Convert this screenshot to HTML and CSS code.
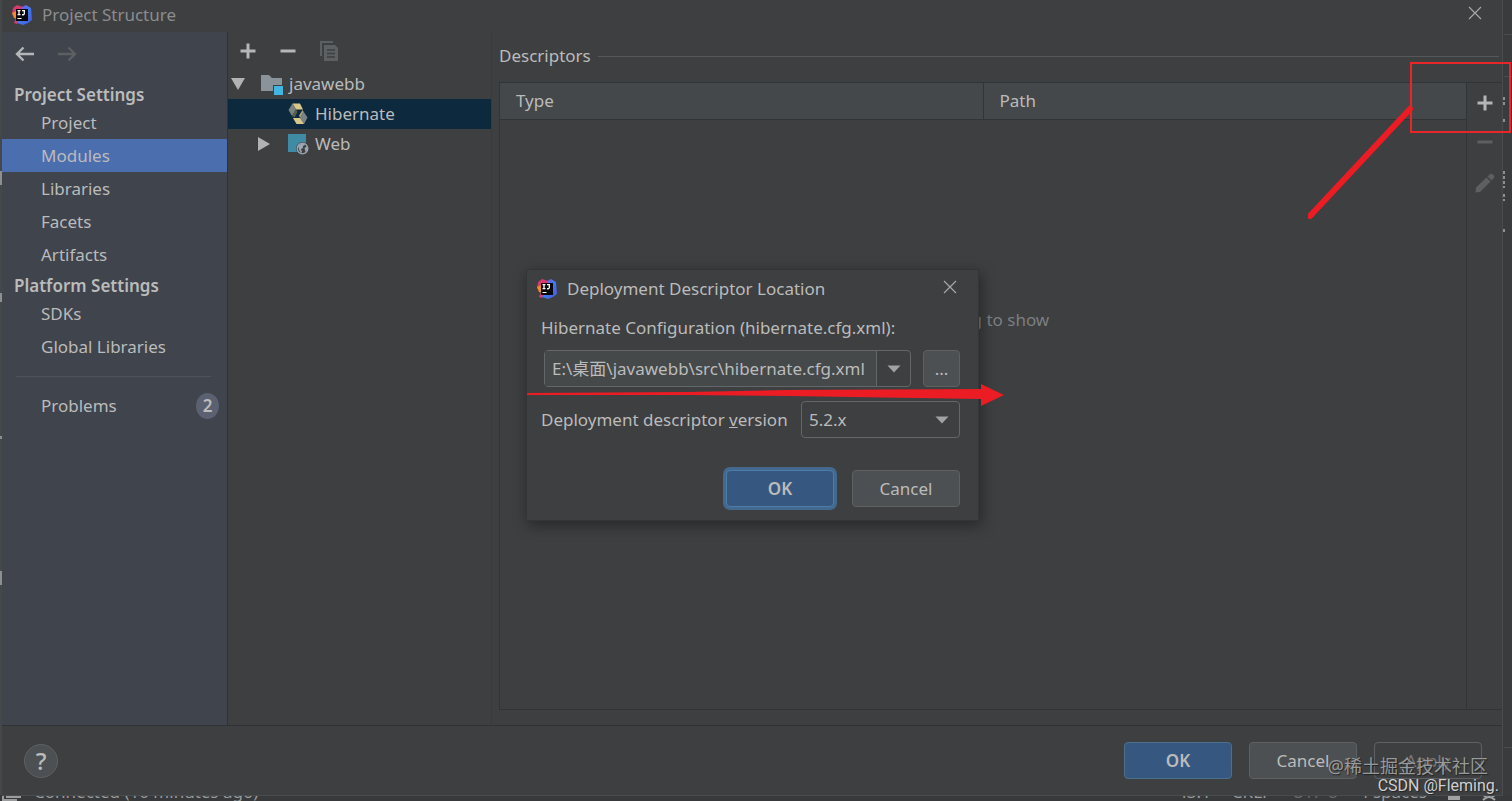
FILE: index.html
```
<!DOCTYPE html>
<html lang="en">
<head>
  <meta charset="UTF-8">
  <meta name="viewport" content="width=device-width, initial-scale=1.0">
  <title>Project Structure</title>
  <link rel="stylesheet" href="styles.css">
</head>
<body>
  <svg width="0" height="0" class="defs">
    <defs>
      <linearGradient id="blue" x1="0" y1="0" x2="1" y2="1">
        <stop offset="0" stop-color="#9a4fd0"/>
        <stop offset="0.5" stop-color="#3d7af0"/>
        <stop offset="1" stop-color="#4a55d8"/>
      </linearGradient>
      <symbol id="logo" viewBox="0 0 20 20">
        <path d="M1 3 5 0 11 2 10 10 5 19 2 18 4 13 0 9Z" fill="#d93a6e"/>
        <path d="M0 8 4 6 5 14 2 13Z" fill="#f08a2c"/>
        <path d="M10 2 14 0 19 3 20 15 16 18 11 20 5 18 10 10Z" fill="url(#blue)"/>
        <rect x="4" y="4" width="12" height="12" fill="#08080c"/>
        <path d="M5.500 5.700h3M7 5.700v4M5.500 9.700h3M10 5.700h3M12.300 5.700v3q0 1.200-2.300 1" fill="none" stroke="#fff" stroke-width="1.300"/>
        <path d="M5.500 13.500h4" stroke="#fff"/>
      </symbol>
      <symbol id="plus" viewBox="0 0 16 16"><path d="M8 0.500v15M0.500 8h15" stroke="currentColor" stroke-width="3"/></symbol>
      <symbol id="minus" viewBox="0 0 16 16"><path d="M0.500 8h15" stroke="currentColor" stroke-width="3"/></symbol>
      <symbol id="close" viewBox="0 0 14 14"><path d="M1 1 13 13M13 1 1 13" stroke="currentColor" stroke-width="1.200"/></symbol>
      <symbol id="caret" viewBox="0 0 14 8"><path d="M0.500 0.500h13L7 7.500Z" fill="currentColor"/></symbol>
    </defs>
  </svg>

  <div class="desktop">
    <!-- editor showing past the window's left side -->
    <svg class="gutter" width="2" height="795" viewBox="0 0 2 795">
      <path d="M1 171v14M1 293v9M1 436v3M1 571v14" stroke="#8d8f90" stroke-width="2"/>
    </svg>
    <div class="window">
      <header class="titlebar">
        <svg class="logo"><use href="#logo"/></svg>
        <h1>Project Structure</h1>
        <button class="close" aria-label="Close"><svg><use href="#close"/></svg></button>
      </header>

      <div class="main">
        <nav class="sidebar">
          <div class="history">
            <button class="icon-btn" aria-label="Back">
              <svg width="20" height="16" viewBox="0 0 20 16"><path d="M19 8H2M8.500 1.500 2 8l6.500 6.500" fill="none" stroke="currentColor" stroke-width="2.400"/></svg>
            </button>
            <button class="icon-btn dim" aria-label="Forward">
              <svg width="20" height="16" viewBox="0 0 20 16"><path d="M1 8h17M11.500 1.500 18 8l-6.500 6.500" fill="none" stroke="currentColor" stroke-width="2.400"/></svg>
            </button>
          </div>
          <h2>Project Settings</h2>
          <a href="#">Project</a>
          <a href="#" class="active">Modules</a>
          <a href="#">Libraries</a>
          <a href="#">Facets</a>
          <a href="#">Artifacts</a>
          <h2 class="next">Platform Settings</h2>
          <a href="#">SDKs</a>
          <a href="#">Global Libraries</a>
          <hr>
          <a href="#">Problems <span class="badge">2</span></a>
        </nav>

        <section class="tree">
          <div class="tree-tools">
            <button class="icon-btn" aria-label="Add"><svg width="16" height="16"><use href="#plus"/></svg></button>
            <button class="icon-btn" aria-label="Remove"><svg width="16" height="16"><use href="#minus"/></svg></button>
            <button class="icon-btn dim" aria-label="Copy">
              <svg width="20" height="20" viewBox="0 0 20 20">
                <path d="M1 15V1h12" fill="none" stroke="currentColor" stroke-width="2"/>
                <path d="M4 4h11l3 3v13H4Z" fill="currentColor"/>
                <path d="M7 9h8M7 12.500h8M7 16h8" stroke="#3d3f41" stroke-width="1.500"/>
              </svg>
            </button>
          </div>
          <div class="row">
            <svg class="toggle" width="14" height="14" viewBox="0 0 14 14"><path d="M0 1h14L7 13Z" fill="#b0b2b3"/></svg>
            <svg width="24" height="22" viewBox="0 0 24 22">
              <path d="M1 2h8l3 3h10v13H1Z" fill="#8a9399"/>
              <path d="M13 12h11v10H13Z" fill="#3d3f41"/>
              <path d="M14 13h9v9h-9Z" fill="#40b6e0"/>
            </svg>
            <span>javawebb</span>
          </div>
          <div class="row leaf selected">
            <svg width="20" height="22" viewBox="0 0 20 22">
              <path d="M4.500 0.500H12L15 6.500H8Z" fill="#d8c98a"/>
              <path d="M4.500 0.500 8 6.500 4 13 0.500 7Z" fill="#7c827e"/>
              <path d="M4 13 8 6.500 9.500 9 6.500 14.500Z" fill="#59604f"/>
              <path d="M15.500 8.500 19.500 14.500 16 21 12 15Z" fill="#7c8286"/>
              <path d="M12 15 11 12.500 14.500 7 15.500 8.500Z" fill="#a9a27a"/>
              <path d="M5 15h7l4 6H8.500Z" fill="#d8c98a"/>
            </svg>
            <span>Hibernate</span>
          </div>
          <div class="row leaf">
            <svg class="toggle" width="14" height="14" viewBox="0 0 14 14"><path d="M1 0v14L13 7Z" fill="#b0b2b3"/></svg>
            <svg width="22" height="22" viewBox="0 0 22 22">
              <path d="M1 1h18v18H1Z" fill="#3f8ba6"/>
              <circle cx="15.500" cy="15.500" r="6.500" fill="#3d3f41"/>
              <circle cx="15.500" cy="15.500" r="5.300" fill="#3d3f41" stroke="#9aa7b0" stroke-width="1.300"/>
              <path d="M11 13q3-3 6-3l1 2-2 1v2l-2 1 1 3-1 1q-2-2-3-7M17.500 15l3-2q1 4-2 6Z" fill="#9aa7b0"/>
            </svg>
            <span>Web</span>
          </div>
        </section>

        <section class="content">
          <h3><span>Descriptors</span></h3>
          <div class="panel">
            <div class="list">
              <table>
                <thead><tr><th>Type</th><th>Path</th></tr></thead>
              </table>
              <p class="empty">Nothing to show</p>
            </div>
            <div class="tools">
              <button class="icon-btn" aria-label="Add descriptor"><svg width="16" height="16"><use href="#plus"/></svg></button>
              <button class="icon-btn dim" aria-label="Remove descriptor"><svg width="16" height="16"><use href="#minus"/></svg></button>
              <button class="icon-btn dim" aria-label="Edit descriptor">
                <svg width="20" height="20" viewBox="0 0 20 20"><path d="M0.500 19.500 1 14.500 11.500 4.500l4 4L5 19ZM12.500 3.500l2-2q1.500-1.500 3.700.3t.3 3.700l-2 2Z" fill="currentColor"/></svg>
              </button>
              <!-- marks the add button -->
              <svg class="mark" width="204" height="160" viewBox="0 0 204 160">
                <rect x="103" y="2" width="99" height="69" fill="none" stroke="#e8262a" stroke-width="2"/>
                <path d="M102 48 2 155" stroke="#ec1c24" stroke-width="6" stroke-linecap="round" fill="none"/>
              </svg>
            </div>
          </div>
        </section>
      </div>

      <footer class="footer">
        <button class="help" aria-label="Help">?</button>
        <div class="buttons">
          <button class="btn primary">OK</button>
          <button class="btn">Cancel</button>
          <button class="btn disabled" disabled>Apply</button>
        </div>
      </footer>

      <div class="modal" role="dialog" aria-labelledby="modal-title">
        <div class="modal-title">
          <svg class="logo"><use href="#logo"/></svg>
          <h4 id="modal-title">Deployment Descriptor Location</h4>
          <button class="close" aria-label="Close dialog"><svg><use href="#close"/></svg></button>
        </div>
        <label for="config">Hibernate Configuration (hibernate.cfg.xml):</label>
        <div class="path-row">
          <div class="combo">
            <input type="text" id="config" value="E:\桌面\javawebb\src\hibernate.cfg.xml">
            <button aria-label="Recent files"><svg width="14" height="8"><use href="#caret"/></svg></button>
          </div>
          <button class="browse" aria-label="Browse">...</button>
        </div>
        <div class="version-row">
          <label for="version">Deployment descriptor <u>v</u>ersion</label>
          <div class="select">
            <select id="version"><option>5.2.x</option></select>
            <svg width="14" height="8"><use href="#caret"/></svg>
          </div>
        </div>
        <div class="buttons">
          <button class="btn primary focus">OK</button>
          <button class="btn">Cancel</button>
        </div>
        <svg class="arrow" width="478" height="24" viewBox="0 0 478 24">
          <path d="M0 10 160 9 260 7 454 6V1L477 12 454 23V16L260 13 160 12 0 12Z" fill="#ec1c24"/>
        </svg>
      </div>
    </div>
    <!-- editor showing past the window's right side -->
    <svg class="edge" width="9" height="795" viewBox="0 0 9 795">
      <path d="M1 34.500h8M1 76.500h8M1 747.500h8" stroke="#4a4d4f"/>
      <path d="M1 171v17M1 194v7M1 229v3M1 97v8M1 119v3" stroke="#8d8f90" stroke-width="2" stroke-dasharray="3 2"/>
    </svg>
  </div>

  <div class="statusbar">
    <svg width="20" height="5" viewBox="0 0 20 5"><path d="M1 0v4h14M5 0v1h13V0" fill="none" stroke="#9a9c9d" stroke-width="2"/></svg>
    <span>Connected (10 minutes ago)</span>
    <div class="status-right">
      <span>43:1</span>
      <span>CRLF</span>
      <span class="faint">UTF-8</span>
      <span>4 spaces</span>
      <svg width="48" height="6" viewBox="0 0 48 6"><path d="M0 1h12v4H0Z" fill="#a0a2a3"/><path d="M35 5q6-6 12 0M35 0l3 2M47 0l-3 2" stroke="#a0a2a3" stroke-width="2" fill="none"/></svg>
    </div>
  </div>

  <div class="watermark">
    <p class="community">@稀土掘金技术社区</p>
    <p class="author">CSDN @Fleming.</p>
  </div>
</body>
</html>
```
FILE: styles.css
```
* { box-sizing: border-box; }
body {
  margin: 0;
  height: 100vh;
  display: flex; flex-direction: column;
  position: relative;
  overflow: hidden;
  background: #37393b;
  color: #bbbbbb;
  font: 17px/24px "Noto Sans", "Noto Sans CJK SC", sans-serif;
}
h1, h2, h3, h4, p { margin: 0; font-size: 17px; font-weight: normal; }
button, input, select { font: inherit; color: inherit; margin: 0; }
button { padding: 0; border: none; background: none; }
svg { display: block; flex: none; }
.defs { position: absolute; }

.desktop { flex: 1; display: flex; min-height: 0; overflow: hidden; }
.window {
  flex: 1;
  position: relative;
  display: flex; flex-direction: column;
  background: #3d3f41;
  border-right: 1px solid #4a4d4f;
  border-bottom: 1px solid #4a4d4f;
}
.gutter { background: #45484b; }
.edge { background: #393b3d; }

/* title bar */
.titlebar { display: flex; align-items: center; height: 32px; padding: 0 20px 2px 10px; gap: 10px; }
.titlebar h1 { flex: 1; color: #8b8d8e; }
.logo { width: 20px; height: 20px; }
.close { color: #a5a7a8; }
.close svg { width: 14px; height: 14px; }
.titlebar .close { margin-bottom: 4px; }

.icon-btn { display: flex; color: #b4b6b7; }
.icon-btn.dim { color: #5d6062; }

.main { flex: 1; display: flex; min-height: 0; }

/* sidebar */
.sidebar {
  width: 226px;
  background: #3f444d;
  border-right: 1px solid #303335;
}
.history { display: flex; gap: 22px; height: 52px; padding: 14px 0 0 13px; }
.sidebar h2 { padding-left: 12px; line-height: 22px; font-weight: 600; }
.sidebar .next { margin-top: 4px; }
.sidebar a {
  display: flex; align-items: center; justify-content: space-between;
  height: 33px;
  padding: 0 8px 0 39px;
  color: inherit;
  text-decoration: none;
}
.sidebar a.active { background: #4b6eaf; }
.sidebar hr {
  height: 1px; border: none;
  margin: 13px 16px 12px 14px;
  background: #4d525b;
}
.badge {
  width: 23px; height: 26px;
  border-radius: 50%;
  background: #5b6170;
  text-align: center;
  line-height: 26px;
  font-weight: 600;
}

/* modules tree */
.tree { width: 264px; border-right: 1px solid #383b3d; }
.tree-tools { display: flex; align-items: center; gap: 24px; height: 37px; padding-left: 12px; }
.row { display: flex; align-items: center; gap: 5px; height: 30px; padding-left: 3px; }
.row .toggle { margin-right: 10px; }
.row.leaf { padding-left: 29px; gap: 6px; }
.row.selected { padding-left: 60px; gap: 7px; background: #0d293e; }

/* descriptors */
.content { flex: 1; display: flex; flex-direction: column; padding: 12px 0 15px 7px; }
.content h3 { display: flex; align-items: center; gap: 7px; margin-bottom: 14px; }
.content h3::after { content: ""; flex: 1; height: 1px; margin-right: 3px; background: #555859; }
.panel { flex: 1; display: flex; border: 1px solid #323537; border-right: none; }
.list { flex: 1; display: flex; flex-direction: column; }
table { width: 100%; border-collapse: collapse; table-layout: fixed; }
th {
  height: 36px;
  padding: 0 16px;
  background: #45484a;
  border-bottom: 1px solid #323537;
  text-align: left;
  font-weight: normal;
}
th + th { border-left: 1px solid #323537; }
.empty { margin: auto; padding-bottom: 188px; color: #7c7e80; }
.tools {
  position: relative;
  width: 36px;
  display: flex; flex-direction: column; align-items: center;
  gap: 23px;
  padding-top: 12px;
  border-left: 1px solid #323537;
}
.mark { position: absolute; top: -22px; right: -10px; z-index: 1; }

/* footer */
.footer {
  display: flex; align-items: center; justify-content: space-between;
  height: 70px;
  padding: 0 20px 0 22px;
  border-top: 1px solid #303335;
}
.help {
  width: 34px; height: 34px;
  border: 1px solid #5e6162;
  border-radius: 50%;
  background: #4c5052;
  font-size: 24px; font-weight: 500;
  line-height: 32px;
}
.buttons { display: flex; gap: 17px; }
.btn {
  width: 108px; height: 37px;
  border: 1px solid #5e6162;
  border-radius: 4px;
  background: #4c5052;
}
.btn.primary { background: #365880; border-color: #4c708c; font-weight: 600; }
.btn.disabled { background: none; color: #777777; }
.btn.focus { box-shadow: 0 0 0 3px #43698f; border-color: #4f7ba8; }

/* deployment descriptor dialog */
.modal {
  position: absolute;
  top: 269px;
  left: calc(50% - 226px);
  width: 453px;
  padding: 0 18px 13px 14px;
  background: #3d3f41;
  border: 1px solid #333638;
  box-shadow: 2px 4px 14px rgba(0,0,0,0.4);
}
.modal-title {
  display: flex; align-items: center; gap: 10px;
  height: 38px;
  margin: 0 3px 8px -4px;
}
.modal-title h4 { flex: 1; }
.modal-title .close { margin-bottom: 4px; }
.modal label { display: block; }
.path-row { display: flex; gap: 12px; margin: 10px 0 14px 3px; }
.combo {
  flex: 1; display: flex;
  height: 37px;
  border: 1px solid #646769;
  border-radius: 4px;
}
.combo input {
  flex: 1; min-width: 0;
  padding: 0 7px;
  border: none; outline: none;
  background: #45494a;
}
.combo button {
  width: 34px;
  display: flex; align-items: center; justify-content: center;
  border-left: 1px solid #646769;
  color: #a0a2a3;
}
.browse {
  width: 37px;
  border: 1px solid #5e6162;
  border-radius: 4px;
  background: #4c5052;
}
.version-row { display: flex; align-items: center; justify-content: space-between; margin-bottom: 32px; }
.select { position: relative; width: 159px; }
.select select {
  width: 100%; height: 37px;
  padding: 0 7px;
  appearance: none;
  background: #3d3f41;
  border: 1px solid #646769;
  border-radius: 4px;
}
.select svg { position: absolute; right: 11px; top: 15px; color: #a0a2a3; pointer-events: none; }
.modal .buttons { justify-content: flex-end; gap: 18px; }
.arrow { position: absolute; left: 0; top: 113px; }

/* status bar, mostly behind the window */
.statusbar {
  display: flex; align-items: flex-end; gap: 12px;
  height: 5px;
  padding: 0 16px 0 2px;
  overflow: hidden;
  line-height: 18px;
  color: #9a9c9d;
}
.status-right { display: flex; align-items: flex-end; gap: 21px; margin-left: auto; }
.faint { color: #666869; }

.watermark {
  position: absolute; right: 13px; bottom: 5px;
  text-align: right;
  text-shadow: 1px 1px 1px #222222;
}
.community { margin-right: 11px; line-height: 20px; font-size: 18px; color: #97999a; }
.author { font-family: Roboto, "Liberation Sans", sans-serif; font-size: 16px; line-height: 20px; color: #d0d0d0; }
```
